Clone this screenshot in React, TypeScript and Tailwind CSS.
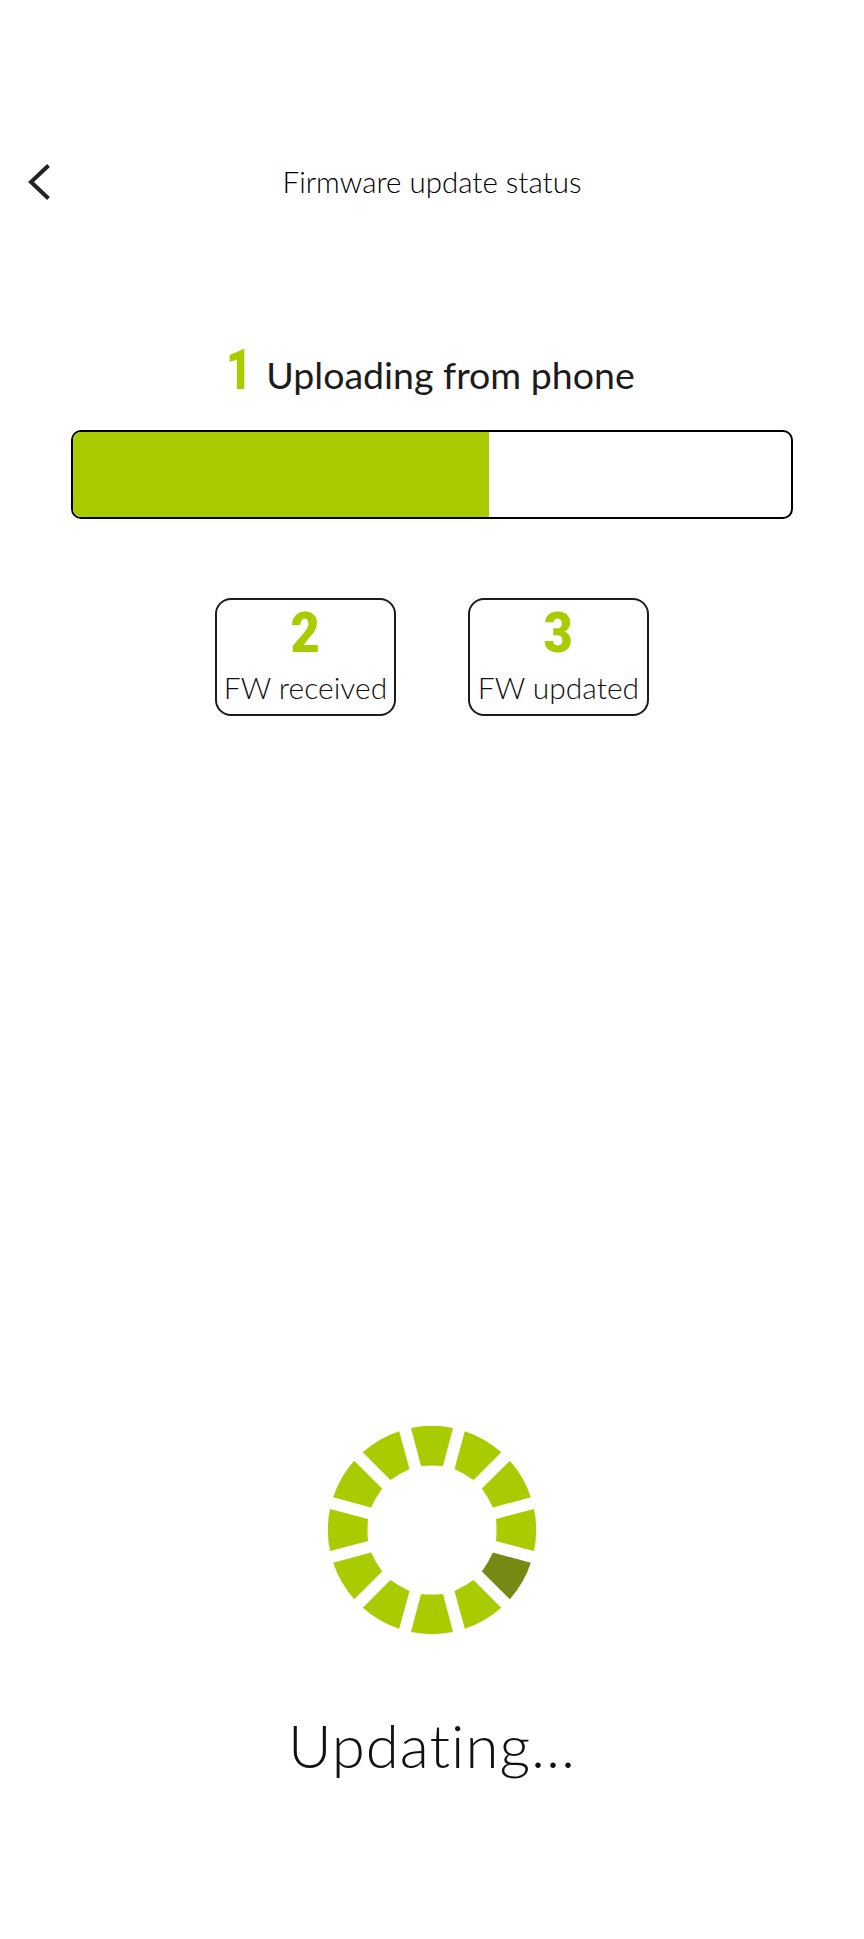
const GREEN = '#a8cc00'
const DARK_GREEN = '#758a13'
const SEGMENTS = [0, 30, 60, 90, 120, 150, 180, 210, 240, 270, 300, 330]

function Spinner() {
  return (
    <svg width="210" height="210" viewBox="-105 -105 210 210">
      {SEGMENTS.map(a => (
        <path
          key={a}
          d="M-21 -102 A104 104 0 0 1 21 -102 L11 -64 Q0 -65 -11 -64 Z"
          transform={`rotate(${a})`}
          fill={a === 120 ? DARK_GREEN : GREEN}
        />
      ))}
    </svg>
  )
}

function BackChevron() {
  return (
    <svg width="24" height="36" viewBox="0 0 24 36" className="ml-[28px]" fill="none">
      <polyline points="20.5,1.5 3,18 20.5,34.5" stroke="#222" strokeWidth="4" />
    </svg>
  )
}

function StepCard({ n, label }: { n: string; label: string }) {
  return (
    <div className="w-[181px] h-[118px] border-2 border-[#1c1c1c] rounded-[16px] flex flex-col items-center">
      <span className="mt-[6px] h-[54px] text-[56px] leading-[54px] font-black text-[#a8cc00] scale-x-90 [font-family:Roboto,sans-serif]">{n}</span>
      <span className="mt-[9px] text-[30px] leading-[36px] font-light text-[#111]">{label}</span>
    </div>
  )
}

export default function App() {
  return (
    <div className="w-[864px] h-[1939px] bg-white flex flex-col [font-family:Lato,sans-serif] text-[#1c1c1c] overflow-hidden">
      {/* header */}
      <div className="mt-[159px] h-[46px] grid grid-cols-[90px_1fr_90px] items-center">
        <BackChevron />
        <h1 className="text-center text-[29.5px] leading-[46px] font-light text-black">Firmware update status</h1>
        <div />
      </div>

      {/* current step */}
      <div className="mt-[141px] h-[52px] flex justify-center items-end gap-[17px]">
        <span className="w-[20px] mb-[2px] flex justify-center scale-x-80 text-[56px] leading-[52px] font-black text-[#a8cc00] [font-family:Roboto,sans-serif]">1</span>
        <span className="-mb-[2px] text-[37.5px] leading-[50px] font-normal">Uploading from phone</span>
      </div>

      {/* progress */}
      <div className="mt-[32px] mx-[71px] h-[89px] border-2 border-black rounded-[10px] overflow-hidden bg-white">
        <div className="h-full w-[416px] bg-[#a8cc00]" />
      </div>

      {/* next steps */}
      <div className="mt-[79px] flex justify-center gap-[72px]">
        <StepCard n="2" label="FW received" />
        <StepCard n="3" label="FW updated" />
      </div>

      {/* spinner */}
      <div className="mt-[709px] flex justify-center">
        <Spinner />
      </div>

      <p className="mt-[75px] text-center text-[60px] leading-[70px] font-light tracking-[1px] text-[#111]">Updating...</p>
    </div>
  )
}
